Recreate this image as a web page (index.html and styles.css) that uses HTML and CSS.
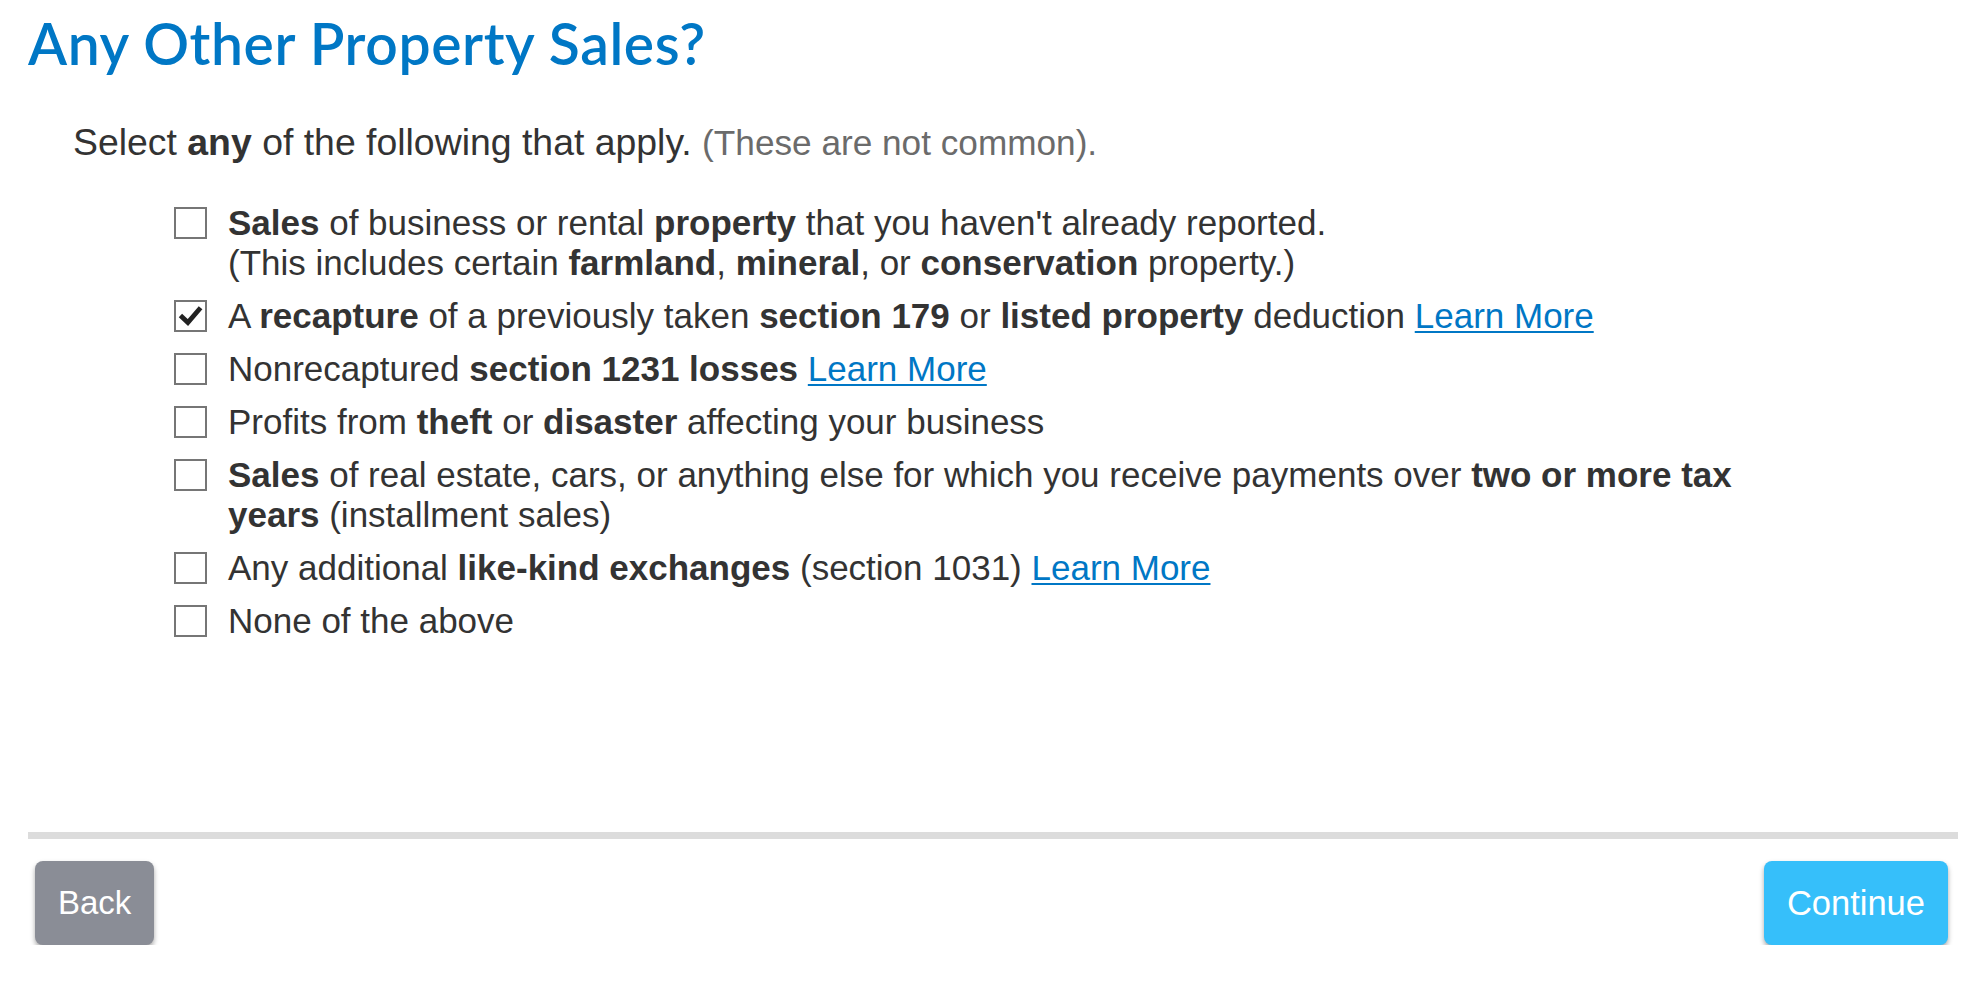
FILE: index.html
```html
<!DOCTYPE html>
<html lang="en">
<head>
<meta charset="utf-8">
<title>Any Other Property Sales?</title>
<link rel="stylesheet" href="styles.css">
</head>
<body>
<main class="page">
  <h1 class="title">Any Other Property Sales?</h1>
  <p class="intro">Select <b>any</b> of the following that apply. <span class="muted">(These are not common).</span></p>
  <ul class="options">
    <li class="option">
      <span class="box"></span>
      <span class="label"><b>Sales</b> of business or rental <b>property</b> that you haven't already reported.<br>(This includes certain <b>farmland</b>, <b>mineral</b>, or <b>conservation</b> property.)</span>
    </li>
    <li class="option">
      <span class="box checked"><svg viewBox="0 0 32 32" class="tick"><path d="M4.5 15.5 L13 23.5 L27.5 6.5" /></svg></span>
      <span class="label">A <b>recapture</b> of a previously taken <b>section 179</b> or <b>listed property</b> deduction <a href="#" class="link">Learn More</a></span>
    </li>
    <li class="option">
      <span class="box"></span>
      <span class="label">Nonrecaptured <b>section 1231 losses</b> <a href="#" class="link">Learn More</a></span>
    </li>
    <li class="option">
      <span class="box"></span>
      <span class="label">Profits from <b>theft</b> or <b>disaster</b> affecting your business</span>
    </li>
    <li class="option">
      <span class="box"></span>
      <span class="label"><b>Sales</b> of real estate, cars, or anything else for which you receive payments over <b>two or more tax years</b> (installment sales)</span>
    </li>
    <li class="option">
      <span class="box"></span>
      <span class="label">Any additional <b>like-kind exchanges</b> (section 1031) <a href="#" class="link">Learn More</a></span>
    </li>
    <li class="option">
      <span class="box"></span>
      <span class="label">None of the above</span>
    </li>
  </ul>
  <footer class="footer">
    <div class="divider"></div>
    <div class="actions">
      <button class="btn btn-back" type="button">Back</button>
      <button class="btn btn-continue" type="button">Continue</button>
    </div>
  </footer>
</main>
</body>
</html>
```

FILE: styles.css
```css
html, body {
  margin: 0;
  padding: 0;
  background: #ffffff;
}

body {
  font-family: "Liberation Sans", Arial, sans-serif;
  color: #333333;
}

.page {
  padding: 0 18px 0 28px;
}

.title {
  margin: 9px 0 0 0;
  font-family: Lato, "Open Sans", sans-serif;
  font-weight: 600;
  font-size: 57px;
  line-height: 68px;
  letter-spacing: 0.6px;
  color: #0077c5;
}

.intro {
  margin: 43px 0 0 45px;
  font-size: 37.4px;
  line-height: 44px;
}

.intro b {
  font-weight: 700;
}

.muted {
  font-size: 35.2px;
  color: #6b6b6b;
}

.options {
  list-style: none;
  margin: 38px 0 0 146px;
  padding: 0;
  max-width: 1580px;
}

.option {
  display: flex;
  align-items: flex-start;
  gap: 21px;
  margin-bottom: 13px;
  font-size: 35px;
  line-height: 40px;
}

.box {
  flex: none;
  box-sizing: border-box;
  width: 33px;
  height: 32px;
  margin-top: 4px;
  border: 2px solid #767676;
  background: #ffffff;
  display: flex;
  align-items: center;
  justify-content: center;
}

.tick {
  width: 29px;
  height: 28px;
}

.tick path {
  fill: none;
  stroke: #222222;
  stroke-width: 5.5;
  stroke-linecap: butt;
  stroke-linejoin: miter;
}

.label b {
  font-weight: 700;
}

.link {
  color: #0077c5;
  text-decoration: underline;
  text-decoration-thickness: 2px;
  text-underline-offset: 3px;
}

.footer {
  margin-top: 191px;
}

.divider {
  height: 7px;
  background: #dcdcdc;
}

.actions {
  display: flex;
  justify-content: space-between;
  align-items: center;
  margin-top: 22px;
  padding: 0 10px 0 7px;
}

.btn {
  height: 84px;
  padding: 0 23px;
  border: none;
  border-radius: 8px;
  font-family: "Liberation Sans", Arial, sans-serif;
  font-size: 33px;
  color: #ffffff;
  box-shadow: 0 3px 5px rgba(0, 0, 0, 0.35);
  cursor: pointer;
}

.btn-back {
  background: #8a8d96;
}

.btn-continue {
  background: #36bffa;
  font-size: 34.5px;
}
```
